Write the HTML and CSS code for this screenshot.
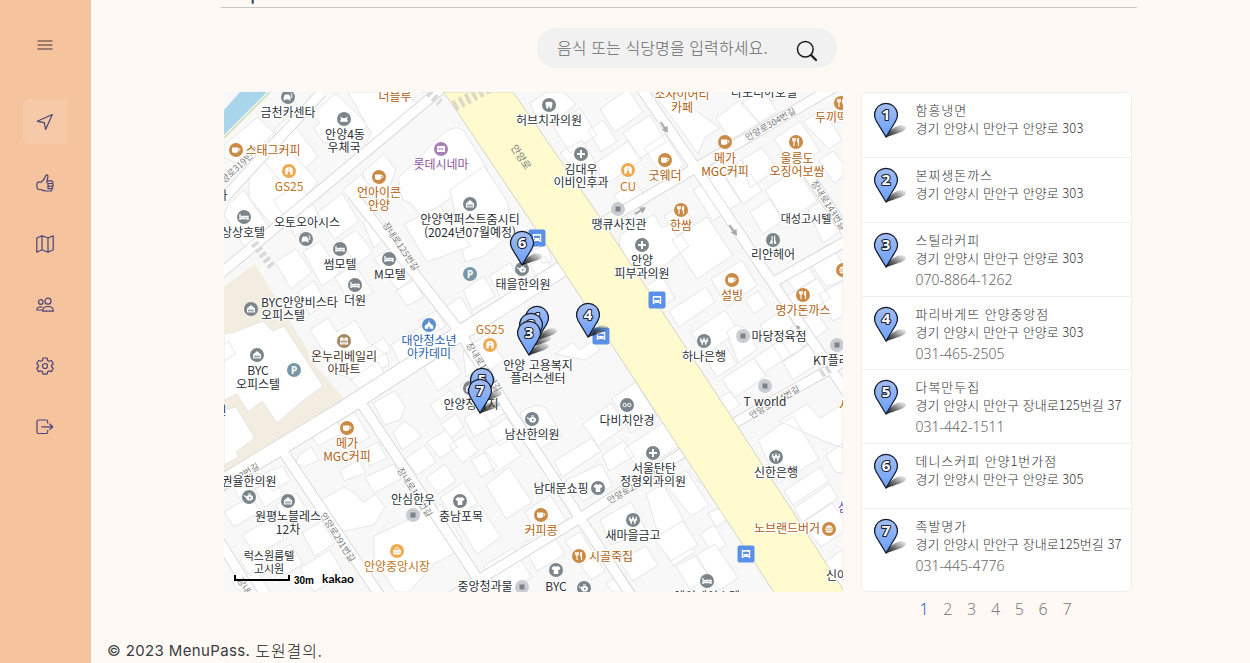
FILE: index.html
```html
<!DOCTYPE html>
<html lang="ko">
<head>
<meta charset="utf-8">
<title>MenuPass</title>
<link rel="stylesheet" href="styles.css">
</head>
<body>
<svg class="defs" width="0" height="0" aria-hidden="true">
  <defs>
    <linearGradient id="pinFill" x1="0" y1="0" x2="0" y2="1"><stop offset="0" stop-color="#a3bdf0"/><stop offset="1" stop-color="#6ba0fb"/></linearGradient>
    <linearGradient id="pinShade" x1="0" y1="1" x2="1" y2="0"><stop offset="0" stop-color="#000" stop-opacity=".95"/><stop offset=".45" stop-color="#222" stop-opacity=".65"/><stop offset="1" stop-color="#777" stop-opacity=".12"/></linearGradient>
    <g id="pin">
      <path d="M0 22.500C3 16 8 11.500 13 10.500C17 9.800 20 11 20 13C19.500 17 9 18.500 0 22.500Z" fill="url(#pinShade)"/>
      <path d="M0 22L-9.700 6A11.500 11.500 0 1 1 9.700 6Z" fill="url(#pinFill)" stroke="#151c2c" stroke-width="1.300"/>
    </g>
    <g id="dot"><circle r="7" fill="currentColor"/></g>
    <g id="bed"><circle r="7" fill="currentColor"/><path d="M-4-3v6M-4 1.500h8v1.500M4 1.500v-2h-5v2" fill="none" stroke="#fff" stroke-width="1.300"/><circle cx="-2.300" cy="-.3" r="1" fill="#fff"/></g>
    <g id="house"><circle r="7" fill="currentColor"/><path d="M-4-.5L0-4L4-.5V3.500H-4Z" fill="#fff"/><path d="M-2 0v3.500M0 0v3.500M2 0v3.500M-3 1.500H3" stroke="currentColor" stroke-width=".6"/></g>
    <g id="cup"><circle r="7" fill="currentColor"/><path d="M-4-2.500H2V1Q2 3-.2 3H-1.800Q-4 3-4 1Z" fill="#fff"/><path d="M2-1.500Q4.500-1.500 4-.2Q3.500 1 2 1" fill="none" stroke="#fff"/></g>
    <g id="food"><circle r="7" fill="currentColor"/><path d="M-3.300-4V-1.500Q-2-.4-.7-1.500V-4M-2-4V4M2.500-4V4" fill="none" stroke="#fff" stroke-width="1.100"/><path d="M1-2.500Q1-4 2.600-4V.6H1Z" fill="#fff"/></g>
    <g id="plus"><circle r="7" fill="currentColor"/><path d="M0-4V4M-4 0H4" stroke="#fff" stroke-width="2"/></g>
    <g id="shop"><circle r="7" fill="currentColor"/><path d="M-3.700 3.500V-1.500Q-3.300-4 0-4T3.700-1.500V3.500H1.300V.5H-1.300V3.500Z" fill="#fff"/><circle cy="-1.700" r=".8" fill="currentColor"/></g>
    <g id="bag"><circle r="7" fill="currentColor"/><path d="M-4-1H4L3.500 3.500H-3.500Z" fill="#fff"/><path d="M-2-1Q-2-3.500 0-3.500T2-1" fill="none" stroke="#fff"/><path d="M-3 1.200H3" stroke="currentColor" stroke-width=".6"/></g>
    <g id="shirt"><circle r="7" fill="currentColor"/><path d="M-4.500-2L-2-4Q0-2.600 2-4L4.500-2L3.300 0L2.300-.6V4H-2.300V-.6L-3.300 0Z" fill="#fff"/></g>
    <g id="pot"><circle r="7" fill="currentColor"/><ellipse cx=".6" cy=".8" rx="3.400" ry="2.800" fill="#fff"/><path d="M-5-1.500L-2 .5M-1-3H2" stroke="#fff" stroke-width="1.200"/><circle cx=".8" cy=".8" r="1" fill="currentColor"/></g>
    <g id="tooth"><circle r="7" fill="currentColor"/><path d="M-3.500-2Q-3-4 0-3Q3-4 3.500-2Q3.500 0 2.300 3.800H1.200L0 .8L-1.200 3.800H-2.300Q-3.500 0-3.500-2Z" fill="#fff"/></g>
    <g id="mail"><circle r="7" fill="currentColor"/><path d="M-4-2.500Q0 .5 4-2.500L3 0L4 2.800H-4L-3 0Z" fill="#fff"/></g>
    <g id="car"><circle r="7" fill="currentColor"/><path d="M-4.300 3.500V0L-3-2.500H1L2.500 0V3.500H1.300V2.600H-3.200V3.500Z" fill="#fff"/><path d="M3.800 1V-3L2.500-4" fill="none" stroke="#fff"/></g>
    <g id="ticket"><circle r="7" fill="currentColor"/><path d="M-4-3H4V-1Q3 0 4 1V3H-4V1Q-3 0-4-1Z" fill="#fff"/><path d="M-2-1L0-.3L2-1V1L0 .3L-2 1Z" fill="currentColor"/></g>
    <g id="won"><circle r="7" fill="currentColor"/><path d="M-3.500-3L-1.800 3L0-2.500L1.800 3L3.500-3M-4.300-.2H4.300" fill="none" stroke="#fff" stroke-width="1.200"/></g>
    <g id="glasses"><circle r="7" fill="currentColor"/><g fill="none" stroke="#fff"><circle cx="-2.300" r="1.700"/><circle cx="2.300" r="1.700"/></g></g>
    <g id="hair"><circle r="7" fill="currentColor"/><path d="M-3.600 3.800L-1.500-.6V-4H-.4V3.800ZM1-4H2.200V0L3.600 3.800H1Z" fill="#fff"/></g>
    <g id="apt"><circle r="7" fill="currentColor"/><path d="M-4 3.500V-2.500L-2-4L0-2.500L2-4L4-2.500V3.500Z" fill="#fff"/><path d="M-2-1.500v4M0-2.500v6M2-1.500v4M-4 .5h8" stroke="currentColor" stroke-width=".7"/></g>
    <g id="school"><circle r="7" fill="currentColor"/><path d="M0-5V-2M-4 3.500V.8L-1.500-1L0-3L1.500-1L4 .8V3.500H1V1.500H-1V3.500Z" fill="#fff" stroke="#fff" stroke-width=".5"/></g>
    <g id="burger"><circle r="7" fill="currentColor"/><path d="M-3.600-1.200Q-3-3.700 0-3.700T3.600-1.200ZM-4-.4H4V.7H-4ZM-3.600 1.500H3.600Q3.500 3.500 2 3.500H-2Q-3.500 3.500-3.600 1.500Z" fill="#fff"/></g>
    <g id="spot"><circle r="7" fill="#c9cdd2"/><rect x="-2.500" y="-2.500" width="5" height="5" fill="#7b8288"/></g>
    <g id="bus"><rect x="-8.500" y="-8.500" width="17" height="17" rx="2" fill="#5a90e8"/><path d="M-4.200-4H4.200V4H2.700V3H-2.700V4H-4.200Z" fill="#fff"/><path d="M-3-2.300H3V0H-3Z" fill="#5a90e8"/><circle cx="-2.400" cy="1.500" r=".6" fill="#5a90e8"/><circle cx="2.400" cy="1.500" r=".6" fill="#5a90e8"/></g>
    <path id="arrow" d="M-6-1H1V-3.500L7 0L1 3.500V1H-6Z" fill="#a9a9a9"/>
  </defs>
</svg>

<div class="app">
  <nav class="sidebar">
    <a class="nav-item nav-toggle"><svg width="16" height="12" viewBox="0 0 16 12"><path d="M.5 2H15.500M.5 6H15.500M.5 10H15.500" fill="none" stroke="#806655" stroke-width="1.300"/></svg></a>
    <a class="nav-item active"><svg viewBox="0 0 18 18"><path d="M16.300 1.500L1.300 8.300L8.300 9.700L9.600 16.500Z"/></svg></a>
    <a class="nav-item"><svg viewBox="0 0 18 18"><path d="M.8 11.500Q.8 8.300 2.500 8.200H5Q8.300 6 9.300 2.800Q9.500.8 10.700.8Q12.300 1 11.800 3.500L11 6.800H15.500Q17 7 17 8.200T15.600 9.500Q17.400 9.600 17.300 10.900T15.800 12.200Q17 12.500 16.800 13.600T15.400 14.700Q16.300 15 16 16Q15.700 17 14.500 17H10Q7.500 17 5 15.500H2.500Q.8 15 .8 11.500ZM11 6.800Q10.500 9.500 12.500 9.500H15.500M12 9.500V12.200H15.500M12 12.200V14.700H15.500"/></svg></a>
    <a class="nav-item"><svg viewBox="0 0 18 18"><path d="M.8 3L6 .8L12 3L17.200 .8V14.800L12 17.200L6 14.800L.8 17.200ZM6 .8V14.800M12 3V17.200"/></svg></a>
    <a class="nav-item"><svg viewBox="0 0 18 18"><circle cx="12" cy="5.200" r="3"/><circle cx="4.800" cy="6" r="2.300"/><path d="M6.700 15.200Q6.700 10.500 12 10.500T17.300 15.200ZM6.300 11.200Q1 10 .8 14H6.500"/></svg></a>
    <a class="nav-item"><svg viewBox="0 0 18 18"><circle cx="9" cy="9" r="2.500"/><path d="M7 1H11L11.600 3.500L13 4.300L15.400 3.500L17.300 6.800L15.500 8.500V9.800L17.300 11.300L15.400 14.600L13 13.900L11.600 14.700L11 17.200H7L6.400 14.700L5 13.900L2.600 14.600L.7 11.300L2.500 9.700V8.400L.7 6.800L2.600 3.500L5 4.300L6.400 3.500Z"/></svg></a>
    <a class="nav-item"><svg viewBox="0 0 18 18"><path d="M11.700 5.500V3.500Q11.700 2 10.200 2H2.500Q1 2 1 3.500V14Q1 15.500 2.500 15.500H10.200Q11.700 15.500 11.700 14V12M5.500 8.800H16.500M13.500 5.800L16.700 8.800L13.500 11.800"/></svg></a>
  </nav>

  <main class="main">
    <header class="page-head"><h1>Map</h1></header>
    <form class="search">
      <span class="placeholder">음식 또는 식당명을 입력하세요.</span>
      <svg width="22" height="22" viewBox="0 0 22 22"><circle cx="9.300" cy="9.300" r="7.800" fill="none" stroke="#1d1d1f" stroke-width="1.500"/><path d="M15 15L20 20" stroke="#1d1d1f" stroke-width="2.300" stroke-linecap="round"/></svg>
    </form>

    <div class="content">
      <svg class="map" width="619" height="500" viewBox="224 92 619 500">
        <rect x="224" y="92" width="619" height="500" fill="#f8f8f9"/>
        <path d="M240 92H267L224 135V110Z" fill="#a9d5ea"/>
        <path d="M270 92L224 138" stroke="#d7e4c0" stroke-width="2"/>
        <path d="M224 287L255 264L309 352V358L345 400L224 473Z" fill="#f3ede1"/>

        <!-- Building footprints -->
        <g class="bld">
          <path d="M224 334L235 332L263 321L273 331L284 326L323 386L299 404L277 423L262 401L248 412L237 394L224 400Z"/>
          <path d="M224 410L236 407L255 438L236 452L239 457L224 465Z"/>
          <path d="M224 344l4-3l8 13l-12 7z"/>
          <path d="M311 115L336 93L368 125L341 152L334 144L323 142L314 128l6-6z"/>
          <path d="M348 92H400L426 108L373 153L364 148L371 133Z"/>
          <path d="M274 130L288 117L318 156L298 175L287 160Z"/>
          <path d="M249 158Q266 141 287 147L318 182L308 193L290 205L268 188Z"/>
          <path d="M249 171L263 160L300 205L272 225L249 198Z"/>
          <path d="M228 205L244 190L270 229L247 251L224 215Z"/>
          <path d="M224 145l34-28l16 16l-34 32l-16 -8z"/>
          <path d="M363 172L384 154L396 170L389 188L369 198Z"/>
          <path d="M398 178L421 157Q450 120 463 130L488 170L437 208L423 220L411 203L403 200Z"/>
          <path d="M450 190L484 166L507 201L513 232L484 256L465 262Z"/>
          <path d="M404 224L440 206L447 216L452 211L462 223L459 231L471 246L427 262Z"/>
          <path d="M274 200l25-17l22 35l-26 18zM316 214l26-21l17 28l-24 18zM343 190l18 -15l10 12l-18 16z"/>
          <path d="M275 262L296 249L312 272L291 289ZM303 252L320 241L340 273L322 286ZM341 240L356 230L373 252L356 265ZM363 222L377 213L392 232L374 248Z"/>
          <path d="M298 292L314 281L326 303L310 315ZM335 277L354 264L373 292L352 308ZM374 259L397 244L416 275L398 290ZM396 290L414 280L424 297L407 306Z"/>
          <path d="M310 330L328 318L337 332L355 320L368 342L387 355L389 365L356 380L338 374ZM366 349L384 338L391 350L372 361Z"/>
          <path d="M351 380L377 361L388 379L364 394ZM391 345L412 331L428 357L404 372ZM414 331L433 319L455 350L432 362ZM418 321L436 311L446 326L428 336Z"/>
          <path d="M447 306L460 297L473 316L458 324ZM463 290L484 276L495 296L472 310ZM489 276L510 263L526 287L503 301ZM530 265L545 256L551 268L537 277ZM531 251L547 245L552 261L543 263Z"/>
          <path d="M472 344L487 334L504 360L490 370ZM424 367L448 351L462 373L438 391ZM463 350L480 369L466 377Z"/>
          <path d="M555 354L573 342L580 350L593 341L600 350L585 360Z"/>
          <path d="M373 403L395 391L405 407L400 420L385 425ZM393 433L404 421L416 429L421 437L402 450ZM430 405L451 390L460 404L440 420ZM441 424L456 414L464 427L450 438ZM460 385L486 371L512 408L484 426Z"/>
          <path d="M488 430L507 418L518 435L499 446ZM464 418L481 408L492 426L474 437ZM405 459L425 445L436 462L417 475ZM427 442L446 430L457 447L440 458ZM449 445L466 434L478 451L462 463ZM484 450L508 437L521 456L495 473ZM471 460L486 452L497 467L481 477ZM426 478L445 464L456 481L438 494ZM440 498L464 482L478 503L453 518ZM486 485L509 467L532 502L506 519ZM456 520L480 505L501 537L477 554Z"/>
          <path d="M311 435L337 421L344 432L318 446ZM299 455L311 447L319 460L304 467L296 463ZM338 422L354 412L370 437L353 447ZM340 470L359 460L366 473L344 481ZM364 449L378 442L387 458L370 466ZM365 477L394 464L401 479L374 493ZM319 501L344 487L355 493L363 503L375 494L385 507L374 525L339 532Z"/>
          <path d="M232 485l22-14l9 12l-24 15zM263 474l19-8l9 14l-18 11zM224 512l27-16l9 16l-26 15zM255 489l19-9l10 15l-19 12zM242 535l30-17l12 21l-28 16zM276 505l20-12l12 18l-20 13zM265 559l26-15l12 20l-26 16zM302 533l20-12l13 22l-20 13zM300 568l30-18l14 24l-30 18zM240 560l17-10l10 16l-17 10zM232 583l24-14l16 26h-28z"/>
          <path d="M374 536L441 504L462 540Q464 550 435 563L409 592H396L374 560Z"/>
          <path d="M484 566l29-18l19 29l-23 15h-8zM523 544l26-16l16 26l-28 17zM565 541l15-9l25 39l-14 9zM525 512l25-17l20 31l-29 17zM555 488l17-10l9 14l-17 11z"/>
          <path d="M520 413Q536 401 546 408L562 436L538 450ZM583 424L611 403L626 426L598 446ZM612 398L636 382L657 416L631 433ZM554 461L592 438L601 451L562 477ZM566 480L601 464L613 486L583 501ZM602 455L624 441L634 456L609 471ZM624 449L667 420L681 445L640 471Z"/>
          <path d="M600 520L631 502L646 530L611 545ZM646 494L663 484L686 524L660 540ZM665 484L686 470L709 505L691 516ZM689 470l10-6l10 13l-9 6zM663 548l21-13l11 17l-22 14zM700 534l14-9l12 20l-13 9zM708 513l12 -5l7 12l-11 7z"/>
          <path d="M619 561L646 546L658 565L633 581ZM654 538L683 521L698 545L671 561ZM676 566L695 556L709 576L690 590ZM606 583l17-10l12 19h-22zM697 555l18-11l23 34l-18 12l-9-10z"/>
          <path d="M530 103L547 92H563L576 104L553 123H538ZM553 126l27-18l17 27l-27 18zM600 109l28-20l15 23l-28 20zM588 130l15-10l14 21l-16 11zM594 164l35-23l13 19l-37 25zM614 195l21-13l14 20l-22 15zM644 148l21-14l19 31l-20 14zM623 133l27-18l16 27l-27 17zM560 153l22-13l18 30l-14 12z"/>
          <path d="M652 92L670 92L720 128L705 137L698 154L677 124ZM716 118l24-18l20 23l-30 17zM741 104l22-14l14 22l-18 11zM768 92h20l-16 10zM774 139l26-18l20 30l-26 18zM803 122l20-13l19 31l-13 9zM819 160l14 -9l10 12v14l-9 6zM742 159L762 148L777 169L750 188ZM693 190l28-18l20 30l-28 19zM723 172l18-12l21 31l-19 13zM765 190l32-21l20 32l-31 22zM750 212l20 -13l13 22l-20 13zM808 210l18-12l16 22v10l-19 13z"/>
          <path d="M620 235L654 214L662 228L673 222L689 246L643 282L619 255ZM672 240L707 217L733 255L697 279ZM664 216l18-12l13 20l-18 12zM643 288l19-12l13 22l-19 12zM669 311L706 287L715 302L679 327ZM691 333L725 310L739 331L706 354ZM711 279L742 260L757 285L727 307Z"/>
          <path d="M727 332Q739 318 749 334L757 349L738 363ZM760 325L784 309L807 345L783 361ZM783 362l27-18l10 18l-27 18zM706 360l20-13l11 17l-20 13zM722 379l32-21l12 18l-32 22zM717 400l14-9l9 14l-14 9zM754 358l27 -18l10 15l-27 18z"/>
          <path d="M783 272l21-13l12 20l-21 13zM806 258l23-14l14 20v16l-16 7zM787 296l30-18l13 20l-30 20zM819 294l24-13v35l-10 5zM790 328l26-17l12 18l-26 18zM745 300l13 -9l9 14l-13 9z"/>
          <path d="M758 440L793 416L819 459L778 483ZM779 421L807 404L820 418L843 404V448L826 442ZM784 491l36-24l9 14l-36 24zM794 508l35-24l9 14l-36 24zM802 523l30-20l11 15v14l-22 15zM826 455l17-12v30l-8 -1zM824 563l19-14v40z"/>
        </g>

        <!-- Side streets -->
        <g class="road-edge">
          <path d="M224 198L322 92M220 274L440 90M353 195L457 328L507 407L580 518L630 594" />
          <path class="broad" d="M570 264L462 332L345 408L220 484"/>
          <path d="M359 400L482 585M282 450L384 602M436 606L580 518L692 447M219 540L256 600M640 87L697 170L772 282L848 394M597 226L697 167L838 85M770 284L848 240M807 172L846 232M722 430L848 359"/>
        </g>
        <g class="road">
          <path d="M224 198L322 92M220 274L440 90M353 195L457 328L507 407L580 518L630 594" />
          <path class="broad" d="M570 264L462 332L345 408L220 484"/>
          <path d="M359 400L482 585M282 450L384 602M436 606L580 518L692 447M219 540L256 600M640 87L697 170L772 282L848 394M597 226L697 167L838 85M770 284L848 240M807 172L846 232M722 430L848 359"/>
        </g>
        <path d="M443 92H513L602 220L727 410L846 594H775L655 411L530 220L452 104Z" fill="#fffbcf" stroke="#c9c9c0" stroke-width=".8"/>
        <path d="M454 106L496 84" stroke="#dbdac8" stroke-width="11" stroke-dasharray="3.500 3.500"/>
        <path d="M424 88L440 103M254 243L273 268M821 374L832 367" stroke="#d9d9d9" stroke-width="8" stroke-dasharray="3.500 3"/>

        <use href="#arrow" transform="translate(664 127) rotate(56)"/>
        <use href="#arrow" transform="translate(640 211) rotate(-32)"/>
        <use href="#arrow" transform="translate(733 230) rotate(54)"/>
        <use href="#arrow" transform="translate(778 119) rotate(-30)"/>
        <use href="#arrow" transform="translate(799 329) rotate(236) scale(.7)"/>

        <!-- Street names -->
        <g class="street">
          <text transform="translate(239 170) rotate(-43)">안양로319번길</text>
          <text class="main-street" transform="translate(518 159) rotate(57)">안양로</text>
          <text transform="translate(398 248) rotate(56)">장내로125번길</text>
          <text transform="translate(481 369) rotate(57)">장내로125번길</text>
          <text transform="translate(412 494) rotate(57)">장내로117번길</text>
          <text transform="translate(335 539) rotate(57)">안양로291번길</text>
          <text transform="translate(236 483) rotate(-32)">안양로293번길</text>
          <text transform="translate(772 127) rotate(-30)">안양로304번길</text>
          <text transform="translate(826 207) rotate(57)">장내로143번길</text>
          <text transform="translate(776 405) rotate(-30)">안양로294번길</text>
          <text transform="translate(634 490) rotate(-30)">안양로291번길</text>
          <text transform="translate(252 604) rotate(57)">장내로113번길</text>
        </g>

        <!-- Places -->
        <g class="gray">
          <use href="#car" x="288" y="97"/><text x="288" y="117">금천카센타</text>
          <use href="#mail" x="344" y="119"/><text x="345" y="139">안양4동</text><text x="344" y="152">우체국</text>
          <use href="#tooth" x="549" y="105"/><text x="549" y="125">허브치과의원</text>
          <use href="#plus" x="581" y="154"/><text x="581" y="174">김대우</text><text x="581" y="187">이비인후과</text>
          <text x="764" y="97">나포디아호텔</text>
          <use href="#bed" x="244" y="217"/><text x="243" y="237">상상호텔</text><text x="222" y="200">나</text><text x="221" y="415">원</text>
          <use href="#car" x="306" y="239"/><text x="307" y="227">오토오아시스</text>
          <use href="#bed" x="340" y="249"/><text x="340" y="269">썸모텔</text>
          <use href="#bed" x="389" y="259"/><text x="390" y="279">M모텔</text>
          <use href="#bed" x="355" y="285"/><text x="355" y="305">더원</text>
          <use href="#house" x="251" y="309"/><text class="start" x="261" y="307">BYC안양비스타</text><text class="start" x="261" y="320">오피스텔</text>
          <use href="#house" x="257" y="355"/><text x="258" y="375">BYC</text><text x="258" y="389">오피스텔</text>
          <use href="#house" x="470" y="204"/><text x="470" y="224">안양역퍼스트줌시티</text><text x="470" y="237">(2024년07월예정)</text>
          <use href="#pot" x="522" y="269"/><text x="523" y="289">태을한의원</text>
          <text x="538" y="370">안양 고용복지</text><text x="538" y="383">플러스센터</text>
          <use href="#house" x="470" y="388"/><text x="471" y="409">안양청과지</text>
          <use href="#pot" x="532" y="419"/><text x="532" y="439">남산한의원</text>
          <use href="#glasses" x="627" y="405"/><text x="627" y="425">다비치안경</text>
          <use href="#plus" x="653" y="453"/><text x="654" y="473">서울탄탄</text><text x="653" y="486">정형외과의원</text>
          <use href="#shirt" x="598" y="488"/><text x="561" y="493">남대문쇼핑</text>
          <use href="#won" x="633" y="520"/><text x="633" y="540">새마을금고</text>
          <use href="#shirt" x="556" y="570"/><text x="556" y="591">BYC</text><use href="#pot" x="584" y="588"/>
          <use href="#bed" x="707" y="581"/><text x="707" y="601">에이케이스텔</text>
          <use href="#spot" x="522" y="587"/><text x="485" y="591">중앙청과물</text>
          <use href="#shirt" x="460" y="501"/><text x="461" y="521">충남포목</text>
          <use href="#spot" x="413" y="515"/><text x="413" y="504">안심한우</text>
          <use href="#pot" x="249" y="497"/><text x="249" y="486">권율한의원</text>
          <use href="#house" x="288" y="501"/><text x="288" y="521">원평노블레스</text><text x="288" y="534">12차</text>
          <text class="small" x="269" y="560">럭스원룸텔</text><text class="small" x="269" y="573">고시원</text>
          <use href="#spot" x="618" y="209"/><text x="619" y="229">땡큐사진관</text>
          <use href="#plus" x="642" y="245"/><text x="642" y="265">안양</text><text x="642" y="278">피부과의원</text>
          <text class="small" x="806" y="223">대성고시텔</text>
          <use href="#hair" x="773" y="240"/><text x="773" y="259">리안헤어</text>
          <use href="#won" x="704" y="341"/><text x="704" y="361">하나은행</text>
          <use href="#spot" x="743" y="336"/><text x="779" y="341">마당정육점</text>
          <use href="#spot" x="837" y="345"/><text class="start" x="813" y="365">KT플라자</text>
          <use href="#spot" x="765" y="386"/><text x="765" y="406">T world</text>
          <use href="#won" x="776" y="457"/><text x="776" y="477">신한은행</text>
          <text class="start" x="826" y="580">신아빌딩</text>
        </g>
        <g class="orange">
          <text x="395" y="101">더블루</text>
          <use href="#cup" x="236" y="150"/><text x="273" y="155">스태그커피</text>
          <use href="#cup" x="379" y="177"/><text x="379" y="197">언아이콘</text><text x="379" y="210">안양</text>
          <text x="682" y="99">소사이어티</text><text x="682" y="112">카페</text>
          <use href="#cup" x="665" y="160"/><text x="665" y="180">굿웨더</text>
          <use href="#cup" x="725" y="142"/><text x="725" y="163">메가</text><text x="725" y="176">MGC커피</text>
          <use href="#food" x="796" y="142"/><text x="797" y="163">울릉도</text><text x="797" y="176">오징어보쌈</text>
          <use href="#food" x="841" y="103"/><text class="start" x="815" y="122">두끼떡볶이</text>
          <use href="#food" x="681" y="210"/><text x="681" y="230">한쌈</text>
          <use href="#cup" x="732" y="280"/><text x="732" y="300">설빙</text>
          <use href="#food" x="803" y="295"/><text x="803" y="315">명가돈까스</text>
          <use href="#burger" x="843" y="270"/><text class="start" x="839" y="410">사</text>
          <use href="#cup" x="347" y="428"/><text x="347" y="448">메가</text><text x="347" y="461">MGC커피</text>
          <use href="#cup" x="541" y="515"/><text x="541" y="535">커피콩</text>
          <use href="#food" x="579" y="556"/><text x="611" y="561">시골죽집</text>
          <use href="#burger" x="829" y="529"/><text x="787" y="533">노브랜드버거</text>
        </g>
        <g class="amber">
          <use href="#shop" x="289" y="171"/><text x="289" y="191">GS25</text>
          <use href="#shop" x="628" y="170"/><text x="628" y="191">CU</text>
          <use href="#shop" x="490" y="345"/><text x="490" y="334">GS25</text>
          <use href="#bag" x="397" y="551"/><text x="397" y="571">안양중앙시장</text>
        </g>
        <g class="purple"><use href="#ticket" x="441" y="149"/><text x="441" y="169">롯데시네마</text><text class="start violet" x="838" y="512">삼</text></g>
        <g class="brown"><use href="#apt" x="344" y="341"/><text x="344" y="361">온누리베일리</text><text x="344" y="374">아파트</text></g>
        <g class="blue"><use href="#school" x="429" y="325"/><text x="429" y="345">대안청소년</text><text x="429" y="358">아카데미</text></g>
        <g class="parking">
          <use href="#dot" x="470" y="274"/><text x="470" y="278">P</text>
          <use href="#dot" x="294" y="370"/><text x="294" y="374">P</text>
        </g>
        <use href="#bus" x="537" y="238"/><use href="#bus" x="657" y="300"/><use href="#bus" x="601" y="336"/><use href="#bus" x="746" y="554"/>

        <!-- Result pins -->
        <g class="pins">
          <use href="#pin" x="522" y="243"/><text x="522" y="248">6</text>
          <use href="#pin" x="588" y="315"/><text x="588" y="320">4</text>
          <use href="#pin" x="537" y="318"/><text x="537" y="323">1</text>
          <use href="#pin" x="531" y="325"/><text x="531" y="330">2</text>
          <use href="#pin" x="529" y="333"/><text x="529" y="338">3</text>
          <use href="#pin" x="482" y="380"/><text x="482" y="385">5</text>
          <use href="#pin" x="480" y="391"/><text x="480" y="396">7</text>
        </g>
        <path d="M235 575V580H289V575" fill="none" stroke="#000" stroke-width="2"/>
        <text class="scale" x="294" y="584">30m</text>
        <text class="kakao" x="322" y="583">kakao</text>
      </svg>

      <aside class="results">
        <ul class="list">
          <li class="row"><svg class="marker" width="36" height="38" viewBox="-13 -13 36 38"><g class="pins"><use href="#pin"/><text y="5">1</text></g></svg><div class="info"><p class="name">함흥냉면</p><p class="addr">경기 안양시 만안구 안양로 303</p></div></li>
          <li class="row"><svg class="marker" width="36" height="38" viewBox="-13 -13 36 38"><g class="pins"><use href="#pin"/><text y="5">2</text></g></svg><div class="info"><p class="name">본찌생돈까스</p><p class="addr">경기 안양시 만안구 안양로 303</p></div></li>
          <li class="row tall"><svg class="marker" width="36" height="38" viewBox="-13 -13 36 38"><g class="pins"><use href="#pin"/><text y="5">3</text></g></svg><div class="info"><p class="name">스틸라커피</p><p class="addr">경기 안양시 만안구 안양로 303</p><p class="tel">070-8864-1262</p></div></li>
          <li class="row tall"><svg class="marker" width="36" height="38" viewBox="-13 -13 36 38"><g class="pins"><use href="#pin"/><text y="5">4</text></g></svg><div class="info"><p class="name">파리바게뜨 안양중앙점</p><p class="addr">경기 안양시 만안구 안양로 303</p><p class="tel">031-465-2505</p></div></li>
          <li class="row tall"><svg class="marker" width="36" height="38" viewBox="-13 -13 36 38"><g class="pins"><use href="#pin"/><text y="5">5</text></g></svg><div class="info"><p class="name">다복만두집</p><p class="addr">경기 안양시 만안구 장내로125번길 37</p><p class="tel">031-442-1511</p></div></li>
          <li class="row"><svg class="marker" width="36" height="38" viewBox="-13 -13 36 38"><g class="pins"><use href="#pin"/><text y="5">6</text></g></svg><div class="info"><p class="name">데니스커피 안양1번가점</p><p class="addr">경기 안양시 만안구 안양로 305</p></div></li>
          <li class="row last"><svg class="marker" width="36" height="38" viewBox="-13 -13 36 38"><g class="pins"><use href="#pin"/><text y="5">7</text></g></svg><div class="info"><p class="name">족발명가</p><p class="addr">경기 안양시 만안구 장내로125번길 37</p><p class="tel">031-445-4776</p></div></li>
        </ul>
        <div class="pages"><a class="on">1</a><a>2</a><a>3</a><a>4</a><a>5</a><a>6</a><a>7</a></div>
      </aside>
    </div>
    <footer class="footer"><span>© 2023 MenuPass.</span><span class="team">도원결의.</span></footer>
  </main>
</div>
</body>
</html>
```
FILE: styles.css
```css
* { box-sizing: border-box; }
body { margin: 0; background: #fef9f5; font-family: "Noto Sans", "Noto Sans CJK KR", sans-serif; overflow: hidden; }
p, ul, h1 { margin: 0; padding: 0; }
.defs { position: absolute; }
.app { display: flex; height: 663px; }

.sidebar { width: 91px; flex: none; background: #f5c49f; display: flex; flex-direction: column; align-items: center; padding-top: 23px; gap: 16px; }
.nav-item { width: 44px; height: 45px; margin-right: 1px; display: flex; align-items: center; justify-content: center; border-radius: 6px 0 0 6px; }
.nav-toggle { height: 44px; margin-bottom: 16px; }
.nav-item.active { background: #f6caa8; }
.nav-item:not(.nav-toggle) svg { width: 18px; height: 18px; fill: none; stroke: #4b4376; stroke-width: 1.2; stroke-linejoin: round; }

.main { flex: 1; display: flex; flex-direction: column; align-items: stretch; }
.main > * { flex: none; }
.page-head { width: 916px; height: 8px; margin-left: 130px; border-bottom: 1px solid #c9c7c9; overflow: hidden; display: flex; align-items: flex-end; }
.page-head h1 { font: 400 20px/24px Inter, sans-serif; color: #2c2c50; margin-bottom: 2px; }
.search { width: 300px; height: 40px; margin: 20px 0 0 446px; border-radius: 20px; background: #f1f1f1; display: flex; align-items: center; justify-content: space-between; padding: 0 19px 0 20px; }
.placeholder { font: 300 16px/24px "Noto Sans CJK KR", sans-serif; letter-spacing: .1px; color: #686868; margin-bottom: 2px; }
.search svg { margin-top: 5px; }

.content { display: flex; gap: 18px; margin: 24px 0 0 133px; }
.map { display: block; flex: none; }
.bld path { fill: #fff; stroke: #e0e0e2; stroke-width: .8; }
.road-edge { fill: none; stroke: #d4d4d6; stroke-width: 11; stroke-linejoin: round; }
.road-edge .broad { stroke-width: 17; }
.road { fill: none; stroke: #fff; stroke-width: 9.4; stroke-linejoin: round; }
.road .broad { stroke-width: 15.4; }
.map text { font: 400 12px "Noto Sans CJK KR", sans-serif; text-anchor: middle; fill: #2a3036; stroke: #fff; stroke-width: 2.5px; stroke-linejoin: round; paint-order: stroke; }
.map .small { font-size: 11px; }
.map .start { text-anchor: start; }
.map .street text { font-size: 9px; font-weight: 400; fill: #7a7a7a; stroke-width: 1.5px; }
.map .street .main-street { font-size: 10px; stroke: #fffbcf; }
.gray { color: #7b858b; }
.orange { color: #ca8b47; }
.map .orange text { fill: #b05f12; }
.amber { color: #ecab50; }
.map .amber text { fill: #c0751c; }
.purple { color: #a780b8; }
.map .purple text { fill: #8a56a4; }
.map .purple .violet { fill: #5a50b8; }
.brown { color: #a68762; }
.map .brown text { fill: #4a362a; }
.blue { color: #5c8fce; }
.map .blue text { fill: #2a62ad; }
.parking { color: #7897a6; }
.map .parking text { fill: #fff; stroke: none; font: bold 10px "Noto Sans", sans-serif; }
.pins text, .map .pins text { font: bold 15px "Open Sans", sans-serif; text-anchor: middle; fill: #fff; stroke: #1b2130; stroke-width: 2.2px; stroke-linejoin: round; paint-order: stroke; }
.map .scale { font: bold 10px "Liberation Sans", sans-serif; text-anchor: start; fill: #000; }
.map .kakao { font: bold 12px Lato, sans-serif; text-anchor: start; fill: #000; }

.results { width: 271px; }
.list { list-style: none; height: 500px; background: #fff; border: 1px solid #f0efee; border-radius: 6px; }
.row { height: 65px; display: flex; padding: 8px 0 0 12px; border-bottom: 1px solid #ecefee; }
.row.tall { height: 73.6px; }
.row.last { border-bottom: 0; }
.marker { flex: none; margin: 1px 0 0 -1px; }
.info { padding-left: 6.5px; white-space: nowrap; font: 300 13px/18px "Noto Sans CJK KR", sans-serif; color: #333; }
.name { letter-spacing: .95px; }
.addr { letter-spacing: .05px; }
.tel { font: 300 14px/18px "Noto Sans", sans-serif; color: #666; margin-top: 4px; }
.pages { display: flex; justify-content: center; gap: 14.7px; font: 300 16px/22px "Noto Sans", sans-serif; color: #808080; margin: 6px 2px 0 0; }
.pages .on { color: #1f5cc0; }

.footer { display: flex; gap: 5px; margin: 19px 0 0 16px; font: 400 15px/24px Inter, sans-serif; letter-spacing: .37px; color: #3a3c42; }
.footer .team { font: 300 16px/22px "Noto Sans CJK KR", sans-serif; letter-spacing: .9px; color: #222; }
```
